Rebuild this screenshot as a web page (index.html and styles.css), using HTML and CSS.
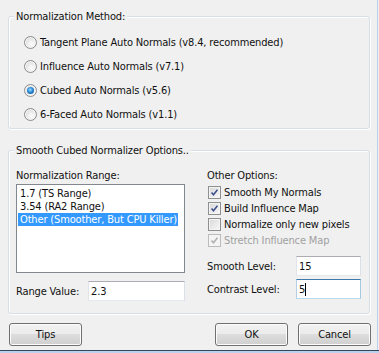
FILE: index.html
```html
<!DOCTYPE html>
<html lang="en">
<head>
  <meta charset="UTF-8">
  <title>Normalizer Options</title>
  <link rel="stylesheet" href="styles.css">
</head>
<body>
  <div class="dialog">
    <fieldset class="group">
      <legend>Normalization Method:</legend>
      <div class="method">
        <label class="radio"><span class="dot"></span>Tangent Plane Auto Normals (v8.4, recommended)</label>
        <label class="radio"><span class="dot"></span>Influence Auto Normals (v7.1)</label>
        <label class="radio"><span class="dot on"></span>Cubed Auto Normals (v5.6)</label>
        <label class="radio"><span class="dot"></span>6-Faced Auto Normals (v1.1)</label>
      </div>
    </fieldset>

    <fieldset class="group second-group">
      <legend>Smooth Cubed Normalizer Options..</legend>
      <div class="smooth">
        <div class="col-left">
          <div class="caption">Normalization Range:</div>
          <ul class="listbox">
            <li><span>1.7 (TS Range)</span></li>
            <li><span>3.54 (RA2 Range)</span></li>
            <li class="sel"><span>Other (Smoother, But CPU Killer)</span></li>
          </ul>
          <div class="field range">
            <span>Range Value:</span>
            <span class="edit wide">2.3</span>
          </div>
        </div>
        <div class="col-right">
          <div class="caption">Other Options:</div>
          <label class="check"><span class="box"><svg viewBox="0 0 13 13"><path d="M3 6.5 L5.3 9.2 L10 3.2"/></svg></span>Smooth My Normals</label>
          <label class="check"><span class="box"><svg viewBox="0 0 13 13"><path d="M3 6.5 L5.3 9.2 L10 3.2"/></svg></span>Build Influence Map</label>
          <label class="check"><span class="box"></span>Normalize only new pixels</label>
          <label class="check off"><span class="box"><svg viewBox="0 0 13 13"><path d="M3 6.5 L5.3 9.2 L10 3.2"/></svg></span>Stretch Influence Map</label>
          <div class="field level">
            <span>Smooth Level:</span>
            <span class="edit">15</span>
          </div>
          <div class="field level second">
            <span>Contrast Level:</span>
            <span class="edit focus">5<i class="caret"></i></span>
          </div>
        </div>
      </div>
    </fieldset>

    <div class="buttons">
      <button class="btn">Tips</button>
      <button class="btn ok">OK</button>
      <button class="btn cancel">Cancel</button>
    </div>
  </div>
  <div class="frame-bottom"></div>
</body>
</html>
```

FILE: styles.css
```css
body {
  margin: 0;
  background: #f0f0f0;
  font-family: "DejaVu Sans Condensed", "DejaVu Sans", sans-serif;
  font-size: 11px;
  line-height: 13px;
  letter-spacing: -0.15px;
  color: #111;
}

.dialog {
  width: 378px;
  height: 350px;
  box-sizing: border-box;
  padding-top: 10px;
  border-right: 1px solid #b9d1ea;
}

.group {
  margin: 0 7px 0 8px;
  padding: 0;
  min-width: 0;
  border: 1px solid #d5dfe5;
  border-radius: 3px;
  box-shadow: inset 1px 1px 0 #fff, 1px 1px 0 #fff;
}

.group legend {
  margin-left: 5px;
  padding: 0 2px;
  background: #f0f0f0;
}

.method {
  padding: 7px 0 2px 15px;
}

.radio {
  display: flex;
  align-items: center;
  height: 24px;
}

.dot {
  width: 13px;
  height: 13px;
  box-sizing: border-box;
  margin-right: 3px;
  border: 1px solid #8c8c8c;
  border-radius: 50%;
  background: radial-gradient(circle at 60% 65%, #fdfdfd 0%, #e6e6e6 55%, #cfcfcf 100%);
  box-shadow: inset 0 0 0 1px #f6f6f6;
  display: flex;
  align-items: center;
  justify-content: center;
}

.dot.on::after {
  content: '';
  width: 7px;
  height: 7px;
  border-radius: 50%;
  background: radial-gradient(circle at 45% 40%, #9fe0ff 0%, #2a8ad8 45%, #11427e 100%);
}

.second-group {
  margin-top: 15px;
}

.smooth {
  display: flex;
  gap: 22px;
  padding: 12px 8px 12px 7px;
}

.col-left {
  width: 169px;
}

.col-right {
  flex: 1;
}

.listbox {
  list-style: none;
  margin: 2px 0 0;
  padding: 2px 0 0 1px;
  height: 89px;
  box-sizing: border-box;
  border: 1px solid #828790;
  background: #fff;
}

.listbox li {
  height: 13px;
}

.listbox li span {
  display: inline-block;
  padding: 0 1px 0 2px;
}

.listbox li.sel span {
  background: #3399ff;
  color: #fff;
}

.field {
  display: flex;
  align-items: center;
  height: 20px;
}

.range {
  margin-top: 8px;
}

.edit {
  margin-left: auto;
  width: 65px;
  height: 20px;
  box-sizing: border-box;
  padding: 0 2px;
  display: flex;
  align-items: center;
  background: #fff;
  border: 1px solid;
  border-color: #abadb3 #dbdfe6 #e3e9ef #e2e3ea;
}

.edit.wide {
  width: 97px;
}

.edit.focus {
  border-color: #3d7bad #a4c9e3 #b7d9ed #b5cfe7;
}

.caret {
  width: 1px;
  height: 13px;
  background: #000;
}

.check {
  display: flex;
  align-items: center;
  height: 16px;
  padding-left: 1px;
}

.check:first-of-type {
  margin-top: 2px;
}

.box {
  width: 13px;
  height: 13px;
  box-sizing: border-box;
  margin-right: 3px;
  border: 1px solid #8e8f8f;
  background: linear-gradient(135deg, #d8d8d8, #f8f8f8);
  box-shadow: inset 0 0 0 1px #f4f4f4;
}

.box svg {
  display: block;
  width: 11px;
  height: 11px;
}

.box path {
  fill: none;
  stroke: #3c5192;
  stroke-width: 1.8;
}

.check.off {
  color: #a0a0a0;
}

.check.off .box {
  border-color: #bcbcbc;
  background: #f4f4f4;
}

.check.off .box path {
  stroke: #b0b0b0;
}

.level {
  margin-top: 8px;
}

.level.second {
  margin-top: 3px;
}

.buttons {
  display: flex;
  margin-top: 9px;
  padding: 0 6px 0 9px;
}

.btn {
  width: 73px;
  height: 23px;
  padding: 0;
  font: inherit;
  letter-spacing: inherit;
  color: #111;
  border: 1px solid #707070;
  border-radius: 3px;
  background: linear-gradient(#f2f2f2 0%, #ebebeb 50%, #dddddd 50%, #cfcfcf 100%);
  box-shadow: inset 0 0 0 1px #fcfcfc;
}

.ok {
  margin-left: auto;
}

.cancel {
  margin-left: 10px;
}

.frame-bottom {
  height: 1px;
  border-bottom: 2px solid #b9d1ea;
  background: #33475c;
}
```
